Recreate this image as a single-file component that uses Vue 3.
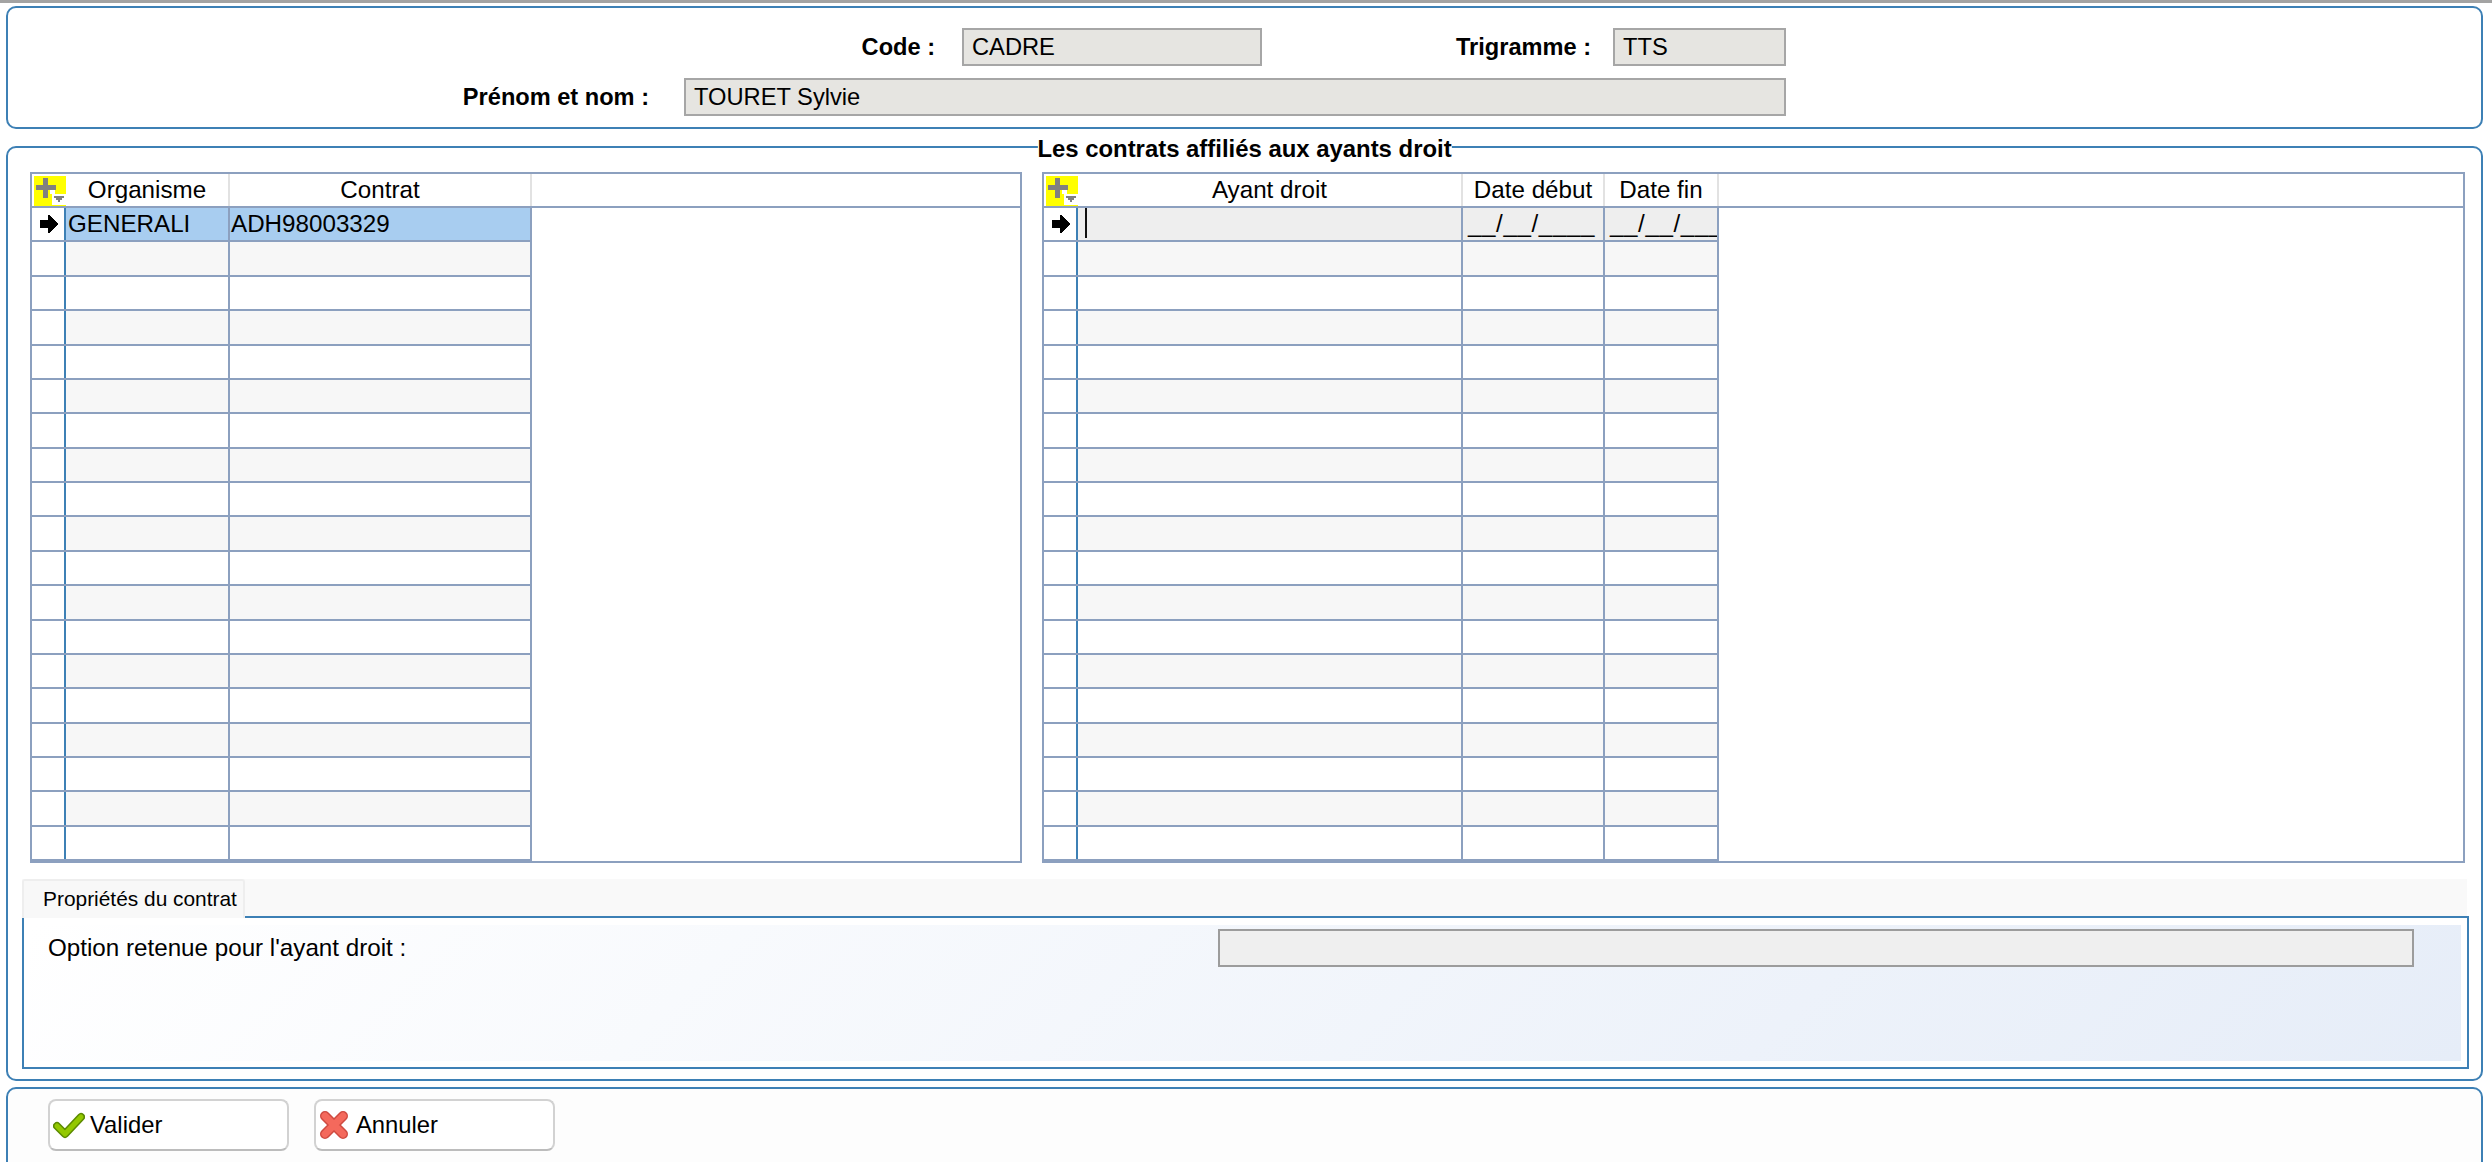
<script setup>
import { ref } from "vue";

const ROW_COUNT = 19;

const contracts = ref([{ organisme: "GENERALI", contrat: "ADH98003329" }]);
const ayants = ref([{ nom: "", debut: "__/__/____", fin: "__/__/____" }]);

const contractRows = Array.from({ length: ROW_COUNT }, (_, i) => contracts.value[i] || {});
const ayantRows = Array.from({ length: ROW_COUNT }, (_, i) => ayants.value[i] || {});
</script>

<template>
  <div class="page">
    <section class="box box-head">
      <div class="form-row row-code">
        <span class="label label-code">Code :</span>
        <div class="field field-code">CADRE</div>
        <span class="label label-tri">Trigramme :</span>
        <div class="field field-tri">TTS</div>
      </div>
      <div class="form-row row-name">
        <span class="label label-name">Prénom et nom :</span>
        <div class="field field-name">TOURET Sylvie</div>
      </div>
    </section>

    <section class="box box-main">
      <h2 class="legend">Les contrats affiliés aux ayants droit</h2>
      <div class="grids">
        <div class="grid grid-contracts">
          <div class="grid-row grid-header">
            <div class="cell head-corner">
              <svg class="add-icon" viewBox="0 0 32 30" width="32" height="30" shape-rendering="crispEdges">
                <rect width="32" height="30" fill="#ffff00" />
                <rect x="18" y="18" width="14" height="11" fill="#fff" />
                <rect x="16" y="9" width="5" height="9" fill="#fff" />
                <rect x="2" y="9" width="20" height="5" fill="#808080" />
                <rect x="9" y="2" width="5" height="20" fill="#808080" />
                <path d="M20 20h10v2h-2v2h-2v2h-2v-2h-2v-2h-2z" fill="#808080" />
              </svg>
            </div>
            <div class="cell">Organisme</div>
            <div class="cell">Contrat</div>
          </div>
          <div
            v-for="(row, index) in contractRows"
            :key="'contract-' + index"
            class="grid-row body-row"
            :class="{ selected: index === 0, alt: index % 2 === 1 }"
          >
            <div class="cell row-head">
              <svg v-if="index === 0" viewBox="0 0 18 18" width="18" height="18" shape-rendering="crispEdges">
                <path d="M0 5h8V0h2l8 9-8 9H8v-5H0z" fill="#000" />
              </svg>
            </div>
            <div class="cell data">{{ row.organisme }}</div>
            <div class="cell data">{{ row.contrat }}</div>
          </div>
        </div>

        <div class="grid grid-ayants">
          <div class="grid-row grid-header">
            <div class="cell head-corner">
              <svg class="add-icon" viewBox="0 0 32 30" width="32" height="30" shape-rendering="crispEdges">
                <rect width="32" height="30" fill="#ffff00" />
                <rect x="18" y="18" width="14" height="11" fill="#fff" />
                <rect x="16" y="9" width="5" height="9" fill="#fff" />
                <rect x="2" y="9" width="20" height="5" fill="#808080" />
                <rect x="9" y="2" width="5" height="20" fill="#808080" />
                <path d="M20 20h10v2h-2v2h-2v2h-2v-2h-2v-2h-2z" fill="#808080" />
              </svg>
            </div>
            <div class="cell">Ayant droit</div>
            <div class="cell">Date début</div>
            <div class="cell">Date fin</div>
          </div>
          <div
            v-for="(row, index) in ayantRows"
            :key="'ayant-' + index"
            class="grid-row body-row"
            :class="{ editing: index === 0, alt: index % 2 === 1 }"
          >
            <div class="cell row-head">
              <svg v-if="index === 0" viewBox="0 0 18 18" width="18" height="18" shape-rendering="crispEdges">
                <path d="M0 5h8V0h2l8 9-8 9H8v-5H0z" fill="#000" />
              </svg>
            </div>
            <div class="cell data">
              <span v-if="index === 0" class="caret"></span>
            </div>
            <div class="cell data mask">{{ row.debut }}</div>
            <div class="cell data mask">{{ row.fin }}</div>
          </div>
        </div>
      </div>

      <div class="tabs">
        <div class="tab-strip">
          <div class="tab">Propriétés du contrat</div>
        </div>
        <div class="tab-body">
          <div class="tab-panel">
            <span class="option-label">Option retenue pour l'ayant droit :</span>
            <div class="option-field"></div>
          </div>
        </div>
      </div>
    </section>

    <section class="box box-actions">
      <button class="action" type="button">
        <svg viewBox="0 0 32 28" width="32" height="28">
          <path d="M4 15l8 8L28 6" fill="none" stroke="#5c8a00" stroke-width="8" stroke-linecap="round" stroke-linejoin="round" />
          <path d="M4 15l8 8L28 6" fill="none" stroke="#93c800" stroke-width="5" stroke-linecap="round" stroke-linejoin="round" />
        </svg>
        <span>Valider</span>
      </button>
      <button class="action action-cancel" type="button">
        <svg viewBox="0 0 30 30" width="30" height="30">
          <path d="M6 6l18 18M24 6L6 24" fill="none" stroke="#cf4a40" stroke-width="10" stroke-linecap="round" />
          <path d="M6 6l18 18M24 6L6 24" fill="none" stroke="#f4695c" stroke-width="7" stroke-linecap="round" />
        </svg>
        <span>Annuler</span>
      </button>
    </section>
  </div>
</template>

<style scoped>
.page {
  height: 1162px;
  overflow: hidden;
  box-sizing: border-box;
  padding: 6px 9px 0 6px;
  border-top: 3px solid #a3a3a3;
  display: flex;
  flex-direction: column;
  background: #fff;
  color: #000;
  font-family: "Liberation Sans", Arial, sans-serif;
  font-size: 24.2px;
}

.box {
  position: relative;
  box-sizing: border-box;
  flex: none;
  border: 2px solid #3d80b5;
  border-radius: 10px;
}

.box-head {
  height: 123px;
  margin-top: -3px;
  padding-top: 20px;
}

.form-row {
  display: flex;
  align-items: center;
}

.label {
  font-weight: 700;
  font-size: 23.6px;
  text-align: right;
  white-space: nowrap;
}

.row-code {
  height: 38px;
}

.label-code {
  width: 927px;
}

.field {
  box-sizing: border-box;
  height: 38px;
  font-size: 23.7px;
  line-height: 34px;
  padding-left: 8px;
  background: #e6e5e1;
  border: 2px solid #a6a6a6;
}

.field-code {
  width: 300px;
  margin-left: 27px;
}

.label-tri {
  width: 137px;
  margin-left: 192px;
}

.field-tri {
  width: 173px;
  margin-left: 22px;
}

.row-name {
  height: 38px;
  margin-top: 12px;
}

.label-name {
  width: 641px;
}

.field-name {
  width: 1102px;
  margin-left: 35px;
}

.box-main {
  height: 935px;
  margin-top: 17px;
  padding: 24px 14px 0;
}

.legend {
  position: absolute;
  top: -13px;
  left: 50%;
  transform: translateX(-50%);
  margin: 0;
  padding: 0;
  background: #fff;
  font-size: 23.9px;
  font-weight: 700;
  line-height: 28px;
  white-space: nowrap;
}

.grids {
  display: flex;
  gap: 20px;
  margin-left: 8px;
  margin-right: 2px;
}

.grid {
  box-sizing: border-box;
  height: 691px;
  border: 2px solid #8ca0bf;
  display: flex;
  flex-direction: column;
}

.grid-contracts {
  width: 992px;
  flex: none;
}

.grid-ayants {
  flex: 1;
}

.grid-row {
  display: grid;
  justify-content: start;
  flex: 1;
  min-height: 0;
  box-sizing: border-box;
  border-bottom: 2px solid #8ca0bf;
  line-height: 32px;
}

.grid-contracts .grid-row {
  grid-template-columns: 34px 164px 302px;
}

.grid-ayants .grid-row {
  grid-template-columns: 34px 385px 142px 114px;
}

.grid-header {
  flex: none;
  height: 34px;
}

.body-row {
  width: fit-content;
}

.cell {
  box-sizing: border-box;
  overflow: hidden;
  white-space: nowrap;
  text-align: center;
  border-right: 2px solid #e2e2e2;
}

.head-corner {
  position: relative;
  border-right: none;
}

.add-icon {
  position: absolute;
  top: 2px;
  left: 2px;
}

.body-row .cell {
  border-right-color: #8ca0bf;
}

.body-row .row-head {
  display: flex;
  align-items: center;
  justify-content: center;
  padding-left: 1px;
  background: #fff;
  border-right-color: #3d80b5;
}

.body-row:last-child {
  border-bottom-width: 4px;
  margin-bottom: -2px;
}

.alt .data {
  background: #f7f7f7;
}

.data {
  position: relative;
  text-align: left;
  padding-left: 2px;
}

.data + .data {
  padding-left: 1px;
}

.selected .data {
  background: #a8cdf0;
}

.editing .data {
  background: #eeeeee;
}

.data.mask {
  padding-left: 5px;
  letter-spacing: 0.6px;
}

.caret {
  position: absolute;
  top: 0;
  left: 7px;
  width: 2px;
  height: 30px;
  background: #111;
}

.tabs {
  margin-top: 16px;
  margin-right: -2px;
}

.tab-strip {
  position: relative;
  z-index: 1;
  height: 37px;
  margin-right: 2px;
  background: #f9f9f9;
}

.tab {
  box-sizing: border-box;
  width: 223px;
  height: 39px;
  padding-left: 19px;
  font-size: 20.9px;
  line-height: 35px;
  white-space: nowrap;
  background: #f8f8f8;
  border: 2px solid #eeeeee;
  border-bottom: none;
  border-radius: 3px 3px 0 0;
}

.tab-body {
  box-sizing: border-box;
  height: 153px;
  padding: 7px 6px 6px;
  border: 2px solid #3d80b5;
}

.tab-panel {
  position: relative;
  height: 100%;
  box-sizing: border-box;
  padding: 8px 0 0 18px;
  background: linear-gradient(135deg, #ffffff 0%, #e6edf8 100%);
}

.option-label {
  line-height: 30px;
}

.option-field {
  position: absolute;
  top: 4px;
  right: 47px;
  box-sizing: border-box;
  width: 1196px;
  height: 38px;
  background: #efefef;
  border: 2px solid #9c9c9c;
}

.box-actions {
  height: 90px;
  margin-top: 6px;
  padding: 10px 0 0 40px;
  display: flex;
  align-items: flex-start;
  gap: 25px;
  background: #fdfdfd;
}

.action {
  box-sizing: border-box;
  width: 241px;
  height: 52px;
  padding: 0 0 0 3px;
  display: flex;
  align-items: center;
  gap: 5px;
  background: #fff;
  border: 2px solid #d2d2d2;
  border-bottom-color: #bcbcbc;
  border-radius: 8px;
  color: #000;
  font-family: inherit;
  font-size: 23.8px;
}

.action-cancel {
  gap: 7px;
}
</style>

<style>
html,
body {
  margin: 0;
  background: #fff;
}
</style>
